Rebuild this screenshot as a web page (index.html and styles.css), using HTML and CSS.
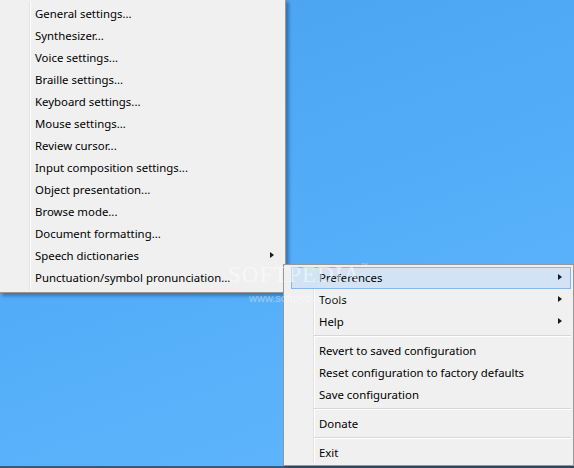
FILE: index.html
```html
<!DOCTYPE html>
<html>
<head>
<meta charset="utf-8">
<link rel="stylesheet" href="styles.css">
</head>
<body>
<div class="desktop">
  <div class="menu menu-sub">
    <div class="item">General settings...</div>
    <div class="item">Synthesizer...</div>
    <div class="item">Voice settings...</div>
    <div class="item">Braille settings...</div>
    <div class="item">Keyboard settings...</div>
    <div class="item">Mouse settings...</div>
    <div class="item">Review cursor...</div>
    <div class="item">Input composition settings...</div>
    <div class="item">Object presentation...</div>
    <div class="item">Browse mode...</div>
    <div class="item">Document formatting...</div>
    <div class="item has-sub">Speech dictionaries<span class="arrow"></span></div>
    <div class="item">Punctuation/symbol pronunciation...</div>
  </div>

  <div class="menu menu-main">
    <div class="item has-sub active">Preferences<span class="arrow"></span></div>
    <div class="item has-sub">Tools<span class="arrow"></span></div>
    <div class="item has-sub">Help<span class="arrow"></span></div>
    <div class="sep"></div>
    <div class="item">Revert to saved configuration</div>
    <div class="item">Reset configuration to factory defaults</div>
    <div class="item">Save configuration</div>
    <div class="sep"></div>
    <div class="item">Donate</div>
    <div class="sep"></div>
    <div class="item">Exit</div>
  </div>

  <div class="watermark">SOFTPEDIA<sup>™</sup></div>
  <div class="watermark-url">www.softpedia.com</div>
  <div class="taskbar"></div>
</div>
</body>
</html>
```

FILE: styles.css
```css
html, body {
  margin: 0;
  padding: 0;
}

body {
  width: 574px;
  height: 468px;
  overflow: hidden;
  font-family: "Noto Sans", "Open Sans", sans-serif;
  font-size: 11.4px;
  color: #000;
}

.desktop {
  position: relative;
  width: 574px;
  height: 468px;
  background: linear-gradient(160deg, #4aa2f0 0%, #55aef8 55%, #62b8ff 100%);
  overflow: hidden;
}

.menu {
  position: absolute;
  display: flex;
  flex-direction: column;
  background: #f0f0f0;
  border: 1px solid #979797;
  box-shadow: 3px 3px 3px rgba(0, 30, 70, 0.35);
  box-sizing: border-box;
}

.menu::before {
  content: "";
  position: absolute;
  left: 29px;
  top: 2px;
  bottom: 2px;
  width: 1px;
  background: #e2e2e2;
  border-right: 1px solid #ffffff;
}

.menu-sub {
  left: -1px;
  top: -1px;
  width: 287px;
  padding: 3px 0 3px;
}

.menu-main {
  left: 283px;
  top: 264px;
  width: 291px;
  padding: 2px 0 1px;
  z-index: 1;
}

.item {
  position: relative;
  height: 22px;
  line-height: 19px;
  margin: 0 2px 0 7px;
  padding-left: 27px;
  white-space: nowrap;
  border: 1px solid transparent;
  box-sizing: border-box;
}

.item.active {
  background: #d1e3f5;
  border-color: #84b8ea;
}

.arrow {
  position: absolute;
  right: 8px;
  top: 6px;
  width: 0;
  height: 0;
  border-top: 3.5px solid transparent;
  border-bottom: 3.5px solid transparent;
  border-left: 4px solid #1a1a1a;
}

.sep {
  position: relative;
  height: 7px;
  margin-left: 30px;
  margin-right: 2px;
}

.sep::after {
  content: "";
  position: absolute;
  left: 0;
  right: 0;
  top: 2px;
  height: 1px;
  background: #d7d7d7;
  border-bottom: 1px solid #ffffff;
}

.watermark {
  position: absolute;
  left: 228px;
  top: 262px;
  z-index: 2;
  font-family: "Liberation Serif", serif;
  font-size: 23px;
  letter-spacing: 1px;
  color: rgba(255, 255, 255, 0.5);
  pointer-events: none;
}

.watermark sup {
  font-size: 7px;
  vertical-align: top;
}

.watermark-url {
  position: absolute;
  left: 249px;
  top: 292px;
  z-index: 2;
  font-family: "Liberation Sans", sans-serif;
  font-size: 11px;
  color: rgba(255, 255, 255, 0.4);
  pointer-events: none;
}

.taskbar {
  position: absolute;
  left: 0;
  right: 0;
  bottom: 0;
  height: 2px;
  background: #3c5a78;
}
```
